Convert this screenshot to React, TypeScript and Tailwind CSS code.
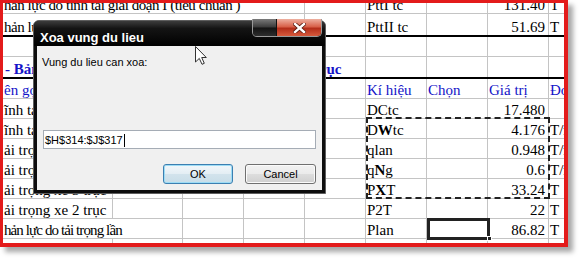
import React from "react";

type Cell = { span?: number; text?: string; right?: boolean; cls?: string };
type RowDef = { h: string; thick?: boolean; cells: Cell[] };

// column widths of the visible sheet part (A..I)
const COLS = [110, 70, 61, 61, 61, 61, 61, 61, 40];

const BLUE = "text-[#1414c8]";

const ROWS: RowDef[] = [
  {
    h: "h-[11px]",
    cells: [
      { span: 4, text: "hản lực do tĩnh tải giai đoạn I (tiêu chuẩn )", cls: "tracking-[-0.45px]" },
      {},
      { text: "PttI tc" },
      {},
      { text: "131.40", right: true },
      { text: "T" },
    ],
  },
  {
    h: "h-[23px]",
    thick: true,
    cells: [
      { span: 4, text: "hản lực do tĩnh tải giai đoạn II (tiêu chuẩn )", cls: "tracking-[-0.45px]" },
      {},
      { text: "PttII tc" },
      {},
      { text: "51.69", right: true },
      { text: "T" },
    ],
  },
  { h: "h-[20px]", cells: [] },
  {
    h: "h-[22px]",
    thick: true,
    cells: [
      {
        span: 5,
        text: "- Bảng tổng hợp tải trọng tác dụng theo phương trục",
        cls: "font-bold text-[#1414c8] pl-[2px]",
      },
    ],
  },
  {
    h: "h-[20px]",
    cells: [
      { text: "ên gọi", cls: BLUE },
      {},
      {},
      {},
      {},
      { text: "Kí hiệu", cls: BLUE },
      { text: "Chọn", cls: BLUE },
      { text: "Giá trị", cls: BLUE },
      { text: "Đơn vị", cls: BLUE },
    ],
  },
  {
    h: "h-[20px]",
    cells: [{ text: "ĩnh tải giai đoạn I" }, {}, {}, {}, {}, { text: "DCtc" }, {}, { text: "17.480", right: true }, {}],
  },
  {
    h: "h-[20px]",
    cells: [{ text: "ĩnh tải giai đoạn II" }, {}, {}, {}, {}, { text: "D|W|tc" }, {}, { text: "4.176", right: true }, { text: "T/m" }],
  },
  {
    h: "h-[20px]",
    cells: [{ text: "ải trọng làn" }, {}, {}, {}, {}, { text: "qlan" }, {}, { text: "0.948", right: true }, { text: "T/m" }],
  },
  {
    h: "h-[20px]",
    cells: [{ text: "ải trọng người" }, {}, {}, {}, {}, { text: "q|N|g" }, {}, { text: "0.6", right: true }, { text: "T/m" }],
  },
  {
    h: "h-[20px]",
    cells: [{ text: "ải trọng xe 3 trục" }, {}, {}, {}, {}, { text: "P|X|T" }, {}, { text: "33.24", right: true }, { text: "T" }],
  },
  {
    h: "h-[20px]",
    cells: [{ text: "ải trọng xe 2 trục" }, {}, {}, {}, {}, { text: "P2T" }, {}, { text: "22", right: true }, { text: "T" }],
  },
  {
    h: "h-[20px]",
    cells: [
      { span: 2, text: "hản lực do tải trọng lần", cls: "tracking-[-0.9px]" },
      {},
      {},
      {},
      { text: "Plan" },
      {},
      { text: "86.82", right: true },
      { text: "T" },
    ],
  },
  { h: "h-[20px]", cells: [] },
];

// "D|W|tc" -> middle part drawn heavier, like the symbol font in the sheet
function CellText({ text }: { text: string }) {
  const parts = text.split("|");
  if (parts.length === 1) return <>{text}</>;
  return (
    <>
      {parts[0]}
      <span className="font-bold">{parts[1]}</span>
      {parts[2]}
    </>
  );
}

function SheetRow({ row }: { row: RowDef }) {
  const cells: React.ReactNode[] = [];
  let col = 0;
  const defs = [...row.cells];
  while (col < COLS.length) {
    const c = defs.shift() ?? {};
    const span = c.span ?? 1;
    const w = COLS.slice(col, col + span).reduce((a, b) => a + b, 0);
    cells.push(
      <div
        key={col}
        style={{ width: w }}
        className={`flex h-full shrink-0 items-end whitespace-nowrap border-r border-[#c4c4c4] leading-[15px] ${
          c.right ? "justify-end pr-[3px]" : "pl-[1px]"
        } ${c.cls ?? ""}`}
      >
        {c.text && <CellText text={c.text} />}
      </div>
    );
    col += span;
  }
  return (
    <div
      className={`flex shrink-0 ${row.h} ${
        row.thick ? "border-b-2 border-black" : "border-b border-[#c4c4c4]"
      }`}
    >
      {cells}
    </div>
  );
}

function Dialog() {
  return (
    <div className="absolute left-[33px] top-[20px] flex h-[174px] w-[293px] flex-col rounded-t-[6px] border border-[#5e5e5e] bg-[#0d0d0d] font-['Liberation_Sans',Arial,sans-serif]">
      {/* title bar */}
      <div className="relative h-[25px] shrink-0 rounded-t-[5px] bg-[linear-gradient(180deg,#3c3c3c_0%,#141414_30%,#000_100%)] pl-[6px] pt-[9px] text-[13px] font-bold leading-[15px] text-white">
        Xoa vung du lieu
        <div className="absolute right-[3px] top-[-2px] flex h-[18px] overflow-hidden rounded-b-[5px] border border-t-0 border-[#9a9a9a]">
          <div className="w-[24px] border-r border-[#111] bg-[linear-gradient(180deg,#7a7a7a_0%,#3a3a3a_48%,#121212_52%,#2e2e2e_100%)]" />
          <div className="flex w-[44px] items-center justify-center bg-[linear-gradient(180deg,#eeb0a0_0%,#d8614a_45%,#b42e1a_55%,#d65a3c_100%)]">
            <svg width="13" height="10" viewBox="0 0 13 10">
              <path d="M2 1 L11 9 M11 1 L2 9" stroke="#5a1a10" strokeWidth="4" strokeLinecap="square" />
              <path d="M2 1 L11 9 M11 1 L2 9" stroke="#fff" strokeWidth="2.4" strokeLinecap="square" />
            </svg>
          </div>
        </div>
      </div>
      {/* client area */}
      <div className="mx-[3px] mb-[3px] flex flex-1 flex-col bg-[#f0f0f0] pl-[5px] pr-[6px] text-[11px] text-black">
        <div className="mt-[10px] leading-[13px]">Vung du lieu can xoa:</div>
        <div className="ml-[1px] mt-[61px] flex h-[19px] items-start border border-[#a5acb5] bg-white pl-[1px] pt-[2px] leading-[15px]">
          <span>$H$314:$J$317</span>
          <span className="ml-[1px] mt-[1px] h-[13px] w-px bg-black" />
        </div>
        <div className="mt-[15px] flex justify-end gap-[12px]">
          <div className="flex h-[20px] w-[70px] items-center justify-center rounded-[3px] border border-[#3c7fb1] bg-[linear-gradient(180deg,#f2f7fa_0%,#e4eef4_48%,#d2e3ec_52%,#c8dde8_100%)] leading-[13px] shadow-[inset_0_0_0_1px_#9ddcf5]">
            OK
          </div>
          <div className="flex h-[20px] w-[71px] items-center justify-center rounded-[3px] border border-[#707070] bg-[linear-gradient(180deg,#f2f2f2_0%,#ebebeb_48%,#dddddd_52%,#cfcfcf_100%)] leading-[13px] shadow-[inset_0_0_0_1px_#fbfbfb]">
            Cancel
          </div>
        </div>
      </div>
    </div>
  );
}

export default function App() {
  return (
    <div className="relative h-[259px] w-[580px] overflow-hidden bg-white">
      {/* captured sheet with red frame */}
      <div className="relative h-[247px] w-[568px] overflow-hidden border-b-4 border-l-[3px] border-r-4 border-t-[3px] border-[#e31b1b] bg-white font-['Liberation_Serif','Times_New_Roman',serif] text-[15px] text-black shadow-[5px_5px_5px_rgba(0,0,0,0.35)]">
        <div className="flex flex-col">
          {ROWS.map((r, i) => (
            <SheetRow key={i} row={r} />
          ))}
        </div>
        {/* copy marquee */}
        <div className="absolute left-[363px] top-[114px] h-[82px] w-[184px] border-2 border-dashed border-[#222]" />
        {/* active cell */}
        <div className="absolute left-[424px] top-[215px] h-[22px] w-[63px] border-[3px] border-[#222]" />
        <div className="absolute left-[484px] top-[233px] h-[5px] w-[5px] border border-white bg-[#222]" />
      </div>

      <Dialog />

      {/* mouse pointer */}
      <svg className="absolute left-[195px] top-[46px]" width="12" height="19" viewBox="0 0 12 19">
        <path d="M0.5 0.5 V16 L4.3 12.4 L7 18.3 L9.3 17.3 L6.7 11.5 H11.3 Z" fill="#fff" stroke="#333" strokeWidth="1" />
      </svg>
    </div>
  );
}
